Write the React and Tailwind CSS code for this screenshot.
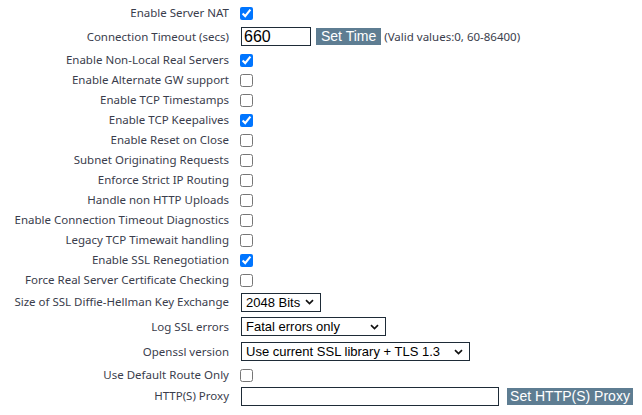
import React from 'react'

const rows = [
  { label: 'Enable Server NAT', type: 'check', checked: true },
  { label: 'Connection Timeout (secs)', type: 'timeout' },
  { label: 'Enable Non-Local Real Servers', type: 'check', checked: true },
  { label: 'Enable Alternate GW support', type: 'check' },
  { label: 'Enable TCP Timestamps', type: 'check' },
  { label: 'Enable TCP Keepalives', type: 'check', checked: true },
  { label: 'Enable Reset on Close', type: 'check' },
  { label: 'Subnet Originating Requests', type: 'check' },
  { label: 'Enforce Strict IP Routing', type: 'check' },
  { label: 'Handle non HTTP Uploads', type: 'check' },
  { label: 'Enable Connection Timeout Diagnostics', type: 'check' },
  { label: 'Legacy TCP Timewait handling', type: 'check' },
  { label: 'Enable SSL Renegotiation', type: 'check', checked: true },
  { label: 'Force Real Server Certificate Checking', type: 'check' },
  { label: 'Size of SSL Diffie-Hellman Key Exchange', type: 'select', value: '2048 Bits', width: 'w-[80px]', h: 'h-[24px]' },
  { label: 'Log SSL errors', type: 'select', value: 'Fatal errors only', width: 'w-[145px]', h: 'h-[25px]' },
  { label: 'Openssl version', type: 'select', value: 'Use current SSL library + TLS 1.3', width: 'w-[229px]', h: 'h-[25px]' },
  { label: 'Use Default Route Only', type: 'check', h: 'h-[22px]' },
  { label: 'HTTP(S) Proxy', type: 'proxy' },
]

const Chevron = () => (
  <svg width="9" height="6" viewBox="0 0 9 6" className="absolute right-[6px] top-1/2 -translate-y-1/2 pointer-events-none">
    <path d="M1 1.2 L4.5 4.6 L8 1.2" fill="none" stroke="#111" strokeWidth="1.7" />
  </svg>
)

const Control = ({ row }) => {
  if (row.type === 'check') {
    return <input type="checkbox" defaultChecked={row.checked} className="m-0 w-[13px] h-[13px]" />
  }
  if (row.type === 'timeout') {
    return (
      <div className="flex items-center">
        <input defaultValue="660" className="ml-[1px] w-[70px] h-[19px] border border-[#1e2b37] px-[2px] text-[16px] text-black font-['Liberation_Sans',Arial,sans-serif] outline-none" />
        <button className="ml-[5px] h-[17px] px-[5px] bg-[#5e7d92] text-white text-[14px] leading-[17px] font-['Liberation_Sans',Arial,sans-serif]">Set Time</button>
        <span className="ml-[3px] text-[11.5px]">(Valid values:0, 60-86400)</span>
      </div>
    )
  }
  if (row.type === 'select') {
    return (
      <div className={`relative ml-[1px] ${row.width} h-[19px] border border-[#1e2b37] bg-white`}>
        <div className="pl-[4px] text-[13px] leading-[17px] text-black font-['Liberation_Sans',Arial,sans-serif] whitespace-nowrap">{row.value}</div>
        <Chevron />
      </div>
    )
  }
  return (
    <div className="flex items-center">
      <input className="ml-[1px] w-[258px] h-[19px] border border-[#1e2b37] outline-none" />
      <button className="ml-[8px] h-[17px] w-[126px] bg-[#5e7d92] text-white text-[14px] leading-[17px] font-['Liberation_Sans',Arial,sans-serif]">Set HTTP(S) Proxy</button>
    </div>
  )
}

export default function App() {
  return (
    <div className="w-[642px] h-[415px] bg-white pt-[3px] text-[#3a3d4c] font-['Noto_Sans',sans-serif] text-[11.5px]">
      {rows.map((row) => {
        const h = row.h || (row.type === 'timeout' ? 'h-[27px]' : 'h-[20px]')
        return (
          <div key={row.label} className={`flex items-center ${h}`}>
            <div className="w-[229px] text-right whitespace-nowrap">{row.label}</div>
            <div className="ml-[11px] flex items-center">
              <Control row={row} />
            </div>
          </div>
        )
      })}
    </div>
  )
}
